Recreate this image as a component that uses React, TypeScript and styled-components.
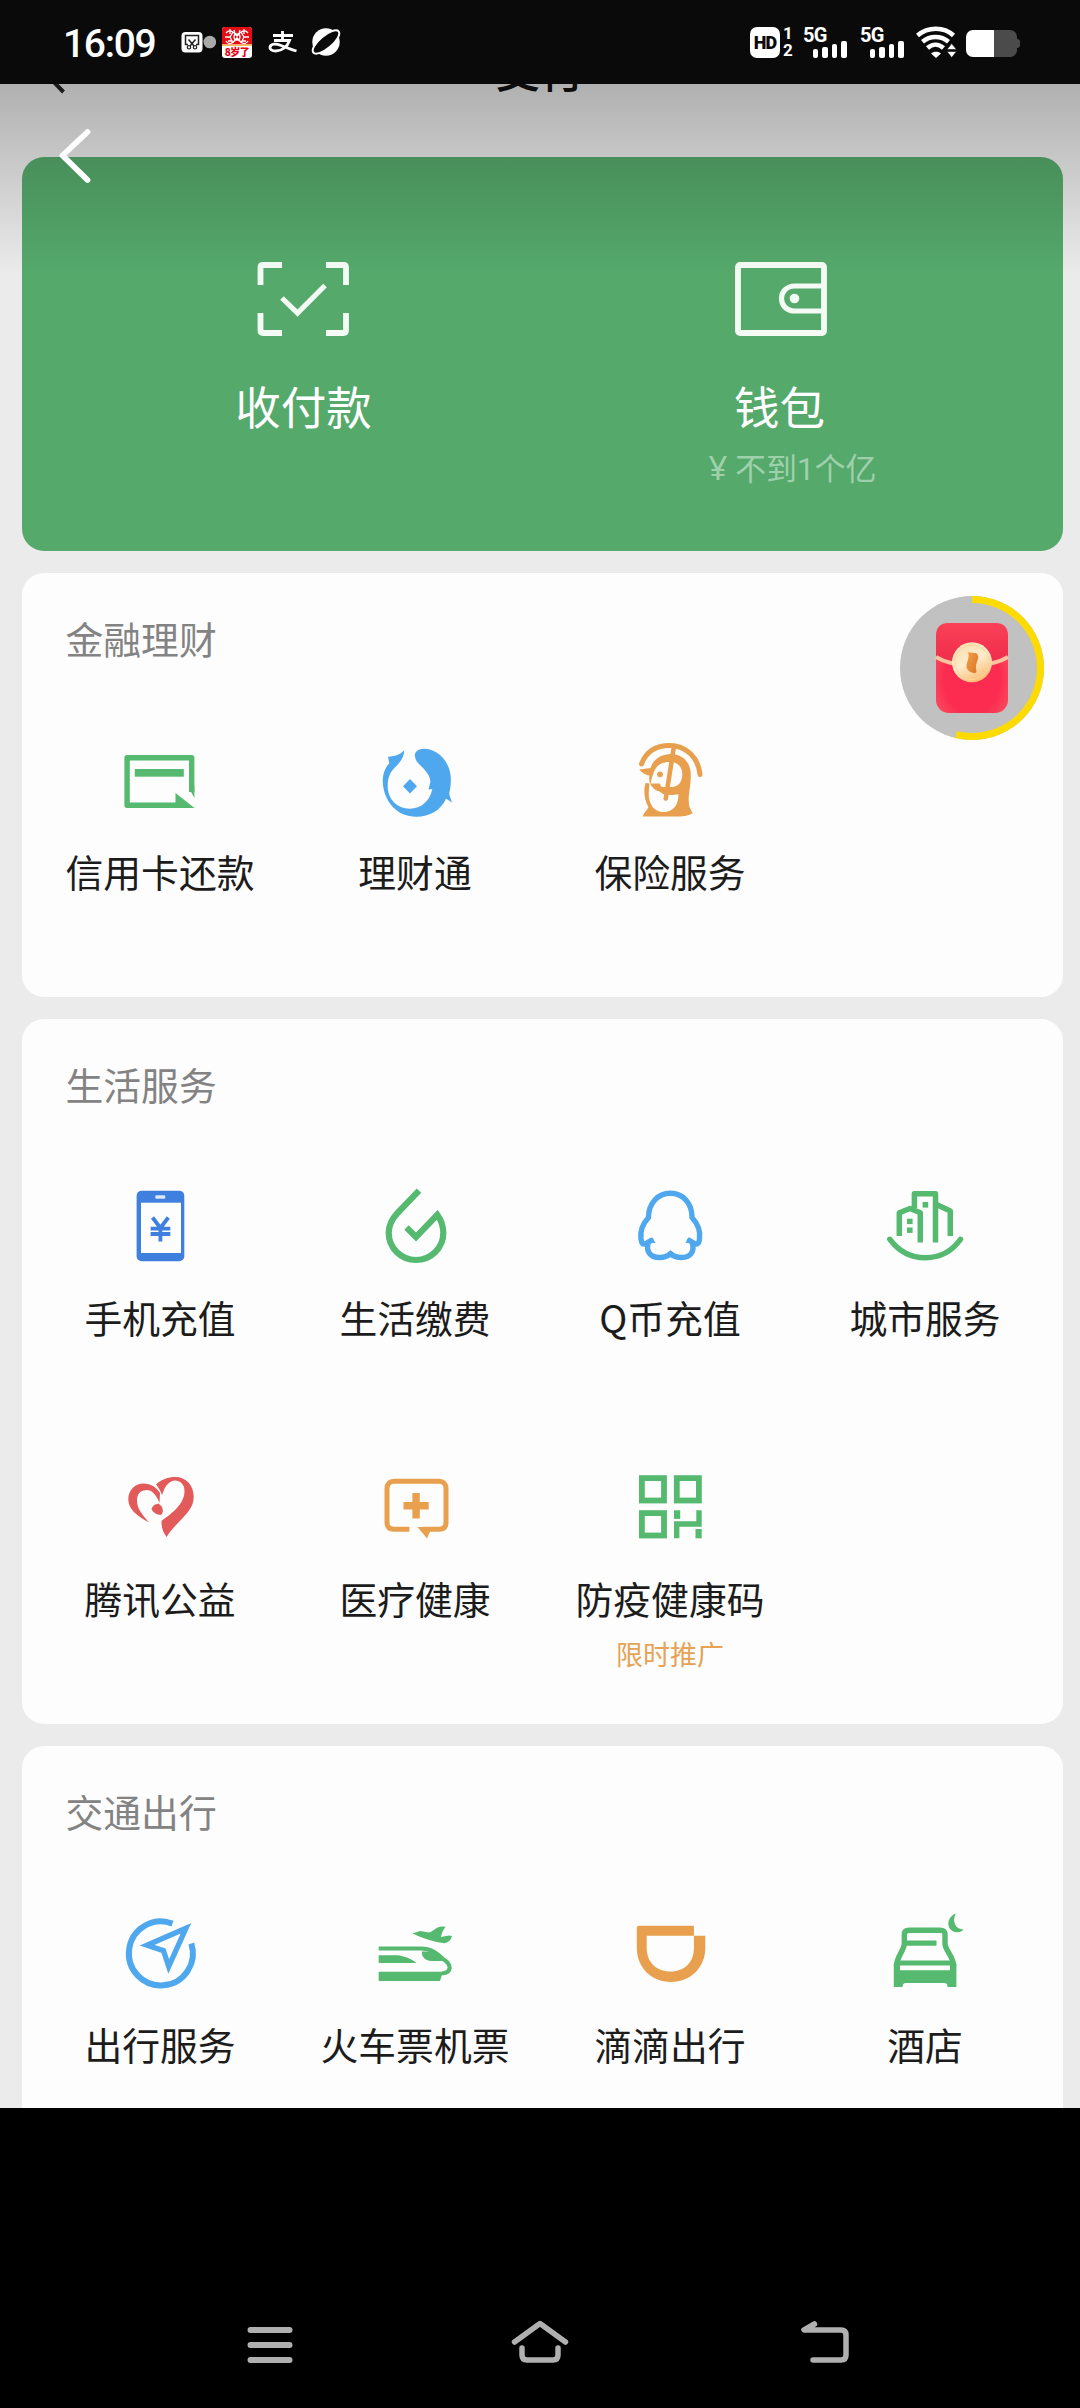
import React from "react";
import styled, { createGlobalStyle } from "styled-components";

const GREEN = "#55b96f";
const BLUE = "#4fa8ee";
const DEEP_BLUE = "#3f80de";
const ORANGE = "#e8a04e";
const RED = "#e25a5a";

const GlobalStyle = createGlobalStyle`
  html, body { margin: 0; padding: 0; background: #000; }
  * { box-sizing: border-box; }
`;

const Phone = styled.div`
  width: 1080px;
  height: 2408px;
  display: flex;
  flex-direction: column;
  background: #000;
  overflow: hidden;
  font-family: Roboto, "Noto Sans CJK SC", sans-serif;
`;

/* ---------- status bar ---------- */

const StatusBar = styled.div`
  height: 84px;
  flex: none;
  display: flex;
  justify-content: space-between;
  background: #0a0a0a;
  color: #fff;
  padding: 0 60px 0 63px;
`;

const StatusGroup = styled.div`
  display: flex;
  align-items: center;
  height: 84px;
`;

const Clock = styled.div`
  width: 118px;
  font: 500 39px/44px Roboto, sans-serif;
  letter-spacing: -1.3px;
  padding-top: 4px;
`;

const StatusIcon = styled.svg<{ $gap?: number }>`
  display: block;
  flex: none;
  margin-left: ${(p) => p.$gap ?? 0}px;
`;

const RedBadge = styled.div`
  width: 30px;
  height: 31px;
  margin-left: 6px;
  border-radius: 3px;
  overflow: hidden;
  background: #fff;
  display: flex;
  flex-direction: column;
`;

const BadgeText = styled.div`
  font: 900 10px/11px "Noto Sans CJK SC", sans-serif;
  letter-spacing: -0.6px;
  color: #e60012;
  text-align: center;
  margin-top: -1px;
`;

const HdBadge = styled.div`
  width: 30px;
  height: 31px;
  border-radius: 7px;
  background: #fff;
  color: #0a0a0a;
  font: 900 18px/31px Roboto, sans-serif;
  letter-spacing: -0.8px;
  text-align: center;
`;

const SimNumbers = styled.div`
  width: 12px;
  margin-left: 2px;
  display: flex;
  flex-direction: column;
  gap: 2px;
  font: 700 17px/15px Roboto, sans-serif;
  text-align: center;
`;

const Signal = styled.div<{ $gap: number }>`
  width: 43px;
  height: 31px;
  margin-left: ${(p) => p.$gap}px;
  display: flex;
  flex-direction: column;
  justify-content: space-between;
`;

const SignalLabel = styled.div`
  height: 14px;
  margin-left: -1px;
  font: 700 20px/16px Roboto, sans-serif;
  letter-spacing: -0.8px;
`;

const SignalBars = styled.div`
  display: flex;
  align-items: flex-end;
  gap: 3.6px;
  margin: -1px 0 0 8.5px;
`;

const SignalBar = styled.div<{ $height: number }>`
  width: 6px;
  height: ${(p) => p.$height}px;
  border-radius: 2px;
  background: #fff;
`;

const Battery = styled.div`
  width: 51px;
  height: 27px;
  margin-left: 9px;
  margin-top: 3px;
  border-radius: 7px;
  background: linear-gradient(90deg, #fff 28px, #4b4b4b 28px);
`;

const BatteryNub = styled.div`
  width: 3px;
  height: 9px;
  margin-top: 3px;
  border-radius: 0 3px 3px 0;
  background: #4b4b4b;
`;

/* ---------- page ---------- */

const Page = styled.main`
  position: relative;
  height: 2024px;
  flex: none;
  overflow: hidden;
  background: #ebebeb;
  padding: 0 17px 0 22px;
  display: flex;
  flex-direction: column;
  gap: 22.5px;
`;

const Header = styled.header`
  height: 50.5px;
  flex: none;
  display: flex;
  justify-content: center;
`;

const HeaderTitle = styled.div`
  margin: -45px 5px 0 0;
  height: 60px;
  font: 500 44px/60px "Noto Sans CJK SC", sans-serif;
  color: #111;
`;

const HeaderBack = styled.svg`
  position: absolute;
  left: 40px;
  top: 0;
`;

const TopShade = styled.div`
  position: absolute;
  inset: 0 0 auto 0;
  height: 190px;
  background: linear-gradient(rgba(0, 0, 0, 0.25), rgba(0, 0, 0, 0));
`;

const BackButton = styled.svg`
  position: absolute;
  left: 54px;
  top: 40px;
`;

const PayPanel = styled.section`
  height: 393.5px;
  flex: none;
  padding: 0 43.5px;
  border-radius: 22px;
  background: #55a96b;
  display: grid;
  grid-template-columns: 476px 476px;
`;

const PayEntry = styled.div`
  display: flex;
  flex-direction: column;
  align-items: center;
  padding-top: 102px;
`;

const PayLabel = styled.div`
  margin-top: 38px;
  font: 400 45.5px/56px "Noto Sans CJK SC", sans-serif;
  color: #fff;
`;

const Balance = styled.div`
  margin-top: 15px;
  padding-left: 26px;
  font: 400 31px/40px Roboto, "Noto Sans CJK SC", sans-serif;
  color: #9fd0ac;
  white-space: pre;
`;

const Yen = styled.span`
  font: 400 33px/40px "Noto Sans", sans-serif;
`;

const Card = styled.section`
  flex: none;
  padding: 39px 10.5px 40px;
  border-radius: 22px;
  background: #fdfdfd;
`;

const CardTitle = styled.h2`
  margin: 0 0 72px 33px;
  font: 400 37.8px/52px "Noto Sans CJK SC", sans-serif;
  color: #838383;
`;

const ServiceGrid = styled.div`
  display: grid;
  grid-template-columns: repeat(4, 1fr);
  grid-auto-rows: 220.5px;
  row-gap: 60.5px;
`;

const Service = styled.div`
  display: flex;
  flex-direction: column;
  align-items: center;
`;

const ServiceIcon = styled.svg`
  display: block;
  width: 90px;
  height: 90px;
  flex: none;
`;

const ServiceLabel = styled.div`
  margin-top: 20px;
  font: 400 37.8px/50px "Noto Sans CJK SC", sans-serif;
  color: #1c1c1c;
  white-space: nowrap;
`;

const ServiceNote = styled.div`
  margin-top: 11px;
  font: 400 27px/40px "Noto Sans CJK SC", sans-serif;
  color: #e6a255;
`;

const RedPacket = styled.svg`
  position: absolute;
  left: 900px;
  top: 512px;
`;

const Spacer = styled.div`
  flex: 1;
`;

const NavBar = styled.nav`
  height: 128px;
  display: flex;
  align-items: center;
  justify-content: space-between;
  padding: 0 220px;
`;

/* ---------- service icons, each on a 90×90 grid ---------- */

const icons: Record<string, React.ReactNode> = {
  card: (
    <g fill={GREEN}>
      <path
        d="M76.700 56V21.800H12.100V69.200H66"
        fill="none"
        stroke={GREEN}
        strokeWidth="5.400"
        strokeLinejoin="round"
      />
      <path d="M74 52L79.400 62V50Z" />
      <rect x="19.800" y="33" width="49" height="7.700" />
      <path d="M60.500 57L79.500 71.900H60.500Z" />
    </g>
  ),
  fish: (
    <g fill={BLUE}>
      <path d="M34.300 14.300C30 19 24 20.500 18 20.700L19.300 27.300C15 32 12.700 38 12.700 46C14 67 28 80.700 46 80.700C60 80.700 71 74 76 62.700C78 63.500 80 65 81.700 66.700C81.500 63 79 60 79.300 56.700C80.700 52 81 46 80.700 40C79 25 68 12.700 53.300 12.700C47 13 44 17 45 20.700C46 26 49 28 52 31C57 36 60.500 41 60.300 46L58.500 53.500L62.300 53C60 65 51 72.700 40 72.700C27 72.700 17.700 63 17.700 50C17.700 42 20 37 23.300 33.300C29 27 33.500 24 34.300 14.300Z" />
      <path d="M40 43L47 50.300L40 57.500L33 50.300Z" />
    </g>
  ),
  insurance: (
    <g>
      <path
        d="M16.500 28C21 16 31 9.500 44.500 9.500C61.500 9.500 73.500 22 75 38.500"
        fill="none"
        stroke={ORANGE}
        strokeWidth="5"
        strokeLinecap="round"
      />
      <path
        fill={ORANGE}
        d="M14.300 33.500L25.500 32C28 23 37 18 46 18C57 18 65.500 26 65.800 38C66 52 62 62 64.500 71L67.700 77.300C63 79.500 60 80.500 53 80.500H17.700C19 76 22 75 23.500 71C19 64 18.500 54 20.500 47L25 47.500C24 44 24 42 24.500 39.500C20 39 16 36 14.300 33.500Z"
      />
      <path
        fill="#fdfdfd"
        d="M28.500 37C31 29 37 26 45 26C53 26 57.300 31 57.300 38C57.300 46 53 51.500 46 51L36 51L35 47.500L25.500 47.500C26.500 44 27 41 28.500 37Z"
      />
      <path
        fill="#fdfdfd"
        d="M24.500 46.500C28 53 30 54 34.500 55.500L38 58L46 59C49 59 52 57.500 53.500 58.500C53.500 69 48 76 38.500 76C29 76 23.500 68 23.700 57Z"
      />
      <path
        d="M49 10L40.800 62.500M34 52.500L52 56"
        stroke={ORANGE}
        strokeWidth="4.600"
        strokeLinecap="round"
      />
      <circle cx="35" cy="38.300" r="2.900" fill={ORANGE} />
    </g>
  ),
  phone: (
    <g>
      <rect x="21.600" y="8.700" width="47.700" height="70.600" rx="5" fill={DEEP_BLUE} />
      <rect x="26" y="20.700" width="40" height="50.300" fill="#fdfdfd" />
      <rect x="40.300" y="13.300" width="10" height="3.400" rx="1.200" fill="#dce9fa" />
      <path
        d="M37.500 35.500L45.400 46L53.300 35.500M45.400 46V59.500M35.600 46.700H55.300M35.600 52H55.300"
        fill="none"
        stroke={DEEP_BLUE}
        strokeWidth="3.800"
      />
    </g>
  ),
  drop: (
    <path
      d="M49 8.700L27.500 31C21.500 37.500 18.700 43.500 18.700 50.700A27.300 27.300 0 0 0 73.300 50.700C73.300 44 71.500 38.500 67.300 32.800L46 55L36.500 45.500"
      fill="none"
      stroke={GREEN}
      strokeWidth="6.200"
    />
  ),
  penguin: (
    <g>
      <path
        d="M45.300 11.300C33 11.300 23.500 21 23.500 35.500C17.500 42 15 50 16 57C16.500 61.500 18 62.500 20 62L26 58.500M23.500 60C20.500 69 25 75.500 34.500 75.500C39 75.500 43 74 45.500 71.500C48 74 52 75.500 56.500 75.500C66 75.500 70 69 67 60M64.500 58.500L70.500 62C73 62.500 74 61 74.500 57C75.500 50 73 42 67 35.500C67 21 58 11.300 45.300 11.300"
        fill="none"
        stroke={BLUE}
        strokeWidth="5.400"
        strokeLinecap="round"
        strokeLinejoin="round"
      />
      <path d="M27 55L30.500 61H22ZM64 55L60.500 61H69ZM45.500 68L50 74H41Z" fill={BLUE} />
    </g>
  ),
  city: (
    <g>
      <g
        fill="none"
        stroke={GREEN}
        strokeWidth="5.500"
        strokeLinejoin="round"
      >
        <path d="M9.900 57.300C19 69.500 31 75.700 45.400 75.700C60 75.700 72 69.500 80.500 57.300" strokeLinecap="round" />
        <path d="M19.300 54V30.700L30 26.500L40.300 30.700V60.500" />
        <path d="M34.400 26V11.700H55.500V60.500" />
        <path d="M56 22.300L70.300 29V54" />
      </g>
      <g fill={GREEN}>
        <rect x="42.600" y="20" width="5.600" height="5.600" />
        <rect x="27" y="36.700" width="5.600" height="5.400" />
        <rect x="27" y="45.500" width="5.600" height="5.400" />
      </g>
    </g>
  ),
  heart: (
    <g fill={RED}>
      <path d="M34 59.500C22 53 13.300 46 13.300 36.500C13.300 27 20 20.500 28.500 20.500C36 20.500 41 24 45 30L44.500 40C41 31 36.500 27 32 27C25.500 27 22 31 22 37.500C22 46 27 51 34 59.500Z" />
      <path d="M41 21.500C46 16.500 53 14 60.300 14C71 14 78.700 22 78.700 34C78.700 50 62 57 51.600 74C47 68 46.500 63 46.500 58C54 52 69 43 69.500 28.500C69.500 21 65 17.500 60 17.500C52 18.500 49.500 25 47 32C45.500 27.500 43.500 24.500 41 21.500Z" />
      <path d="M39 42L43.500 40.500C48.500 44 49 49 46 52C41.500 52 37 49 36.500 45.500Z" />
    </g>
  ),
  medical: (
    <g>
      <path
        d="M39.400 66.300H24C19.500 66.300 17 64 17 59.500V25.500C17 21 19.500 18.300 24 18.300H69C73.500 18.300 76 21 76 25.500V59.500C76 64 73.500 66.300 69 66.300H53"
        fill="none"
        stroke={ORANGE}
        strokeWidth="5"
      />
      <path d="M47.500 64H62L57 75.500Z" fill={ORANGE} />
      <path d="M46.100 30V55.400M33.500 42.700H58.700" stroke={ORANGE} strokeWidth="7.400" />
    </g>
  ),
  qr: (
    <g>
      <g fill="none" stroke={GREEN} strokeWidth="5.800">
        <rect x="16.900" y="15.100" width="22.100" height="22.400" />
        <rect x="51.800" y="15.100" width="22.100" height="22.400" />
        <rect x="16.900" y="50.100" width="22.100" height="22.400" />
        <path d="M74 47.300V61H51.700V75.300" strokeWidth="5.400" />
      </g>
      <rect x="49" y="47.300" width="6.200" height="8.600" fill={GREEN} />
      <rect x="70.500" y="66" width="6.200" height="9.300" fill={GREEN} />
    </g>
  ),
  compass: (
    <g fill="none" stroke={BLUE} strokeWidth="6">
      <path d="M57.500 14.600A32 32 0 1 0 76.300 34.500" />
      <path d="M71 19.200L32 36.200L48.500 41.700L53.700 57.500Z" strokeWidth="5.300" />
    </g>
  ),
  train: (
    <g fill={GREEN}>
      <path
        d="M8.700 39.500H51C61 39.500 67 44 73 50C82 55.500 82 63.500 72 64.500"
        fill="none"
        stroke={GREEN}
        strokeWidth="4.200"
      />
      <path d="M8.700 62.700H73L70 71.900H8.700Z" />
      <path d="M8.700 46.300H27C35 47 41 50 46.500 53.900H8.700Z" />
      <path d="M52 42.500H64L74 52H62C55 52 51 47 52 42.500Z" />
      <path d="M42.500 24.500L50 22L59 23.500C62 23 64 20.500 67 18.800C70 17.500 73 17.200 75.500 18C73 21 71.500 24.500 71 28L76 27C78.500 26 80.500 26.500 82 27C81 30.500 79 33.500 74.500 34.200C64 33 53 29.500 42.500 24.500Z" />
    </g>
  ),
  ride: (
    <path
      fill={ORANGE}
      fillRule="evenodd"
      d="M14 16.700H68.900V26.700H80.300V39C80.300 58 66 73 46 73C26 73 11.800 58 11.800 39V19C11.800 17.400 12.600 16.700 14 16.700ZM21.700 26.700V39C21.700 53 31 62.500 45.500 62.500C60 62.500 68.900 53 68.900 39V26.700Z"
    />
  ),
  hotel: (
    <g>
      <path
        d="M16.500 57C16.500 48 24.300 41 24.300 34.700V26C24.300 22.500 26 21.300 29 21.300H60C63.500 21.300 65 22.500 65 26V34.700C65 41 73.700 48 73.700 57"
        fill="none"
        stroke={GREEN}
        strokeWidth="5.400"
      />
      <path d="M24 34.200H56.500M17 54H73" stroke={GREEN} strokeWidth="5.200" />
      <path
        fill={GREEN}
        d="M13.800 55L20 54.500V61.300H70V54.500L76.400 55V78H67.500C67.500 75 66.500 74 64.500 74H26C23.500 74 22.700 75 22.500 78H13.800Z"
      />
      <path
        fill={GREEN}
        d="M75.700 4.500C65.500 8.500 66 22.500 77 23.300C80 23.300 82.500 22 83.500 20.500C75 20.500 72 12 75.700 4.500Z"
      />
    </g>
  ),
};

type Item = { icon: string; label: string; note?: string };

const sections: { title: string; items: Item[] }[] = [
  {
    title: "金融理财",
    items: [
      { icon: "card", label: "信用卡还款" },
      { icon: "fish", label: "理财通" },
      { icon: "insurance", label: "保险服务" },
    ],
  },
  {
    title: "生活服务",
    items: [
      { icon: "phone", label: "手机充值" },
      { icon: "drop", label: "生活缴费" },
      { icon: "penguin", label: "Q币充值" },
      { icon: "city", label: "城市服务" },
      { icon: "heart", label: "腾讯公益" },
      { icon: "medical", label: "医疗健康" },
      { icon: "qr", label: "防疫健康码", note: "限时推广" },
    ],
  },
  {
    title: "交通出行",
    items: [
      { icon: "compass", label: "出行服务" },
      { icon: "train", label: "火车票机票" },
      { icon: "ride", label: "滴滴出行" },
      { icon: "hotel", label: "酒店" },
    ],
  },
];

function Signal5G({ gap }: { gap: number }) {
  return (
    <Signal $gap={gap}>
      <SignalLabel>5G</SignalLabel>
      <SignalBars>
        {[9, 11, 14, 17].map((h) => (
          <SignalBar key={h} $height={h} />
        ))}
      </SignalBars>
    </Signal>
  );
}

function Status() {
  return (
    <StatusBar>
      <StatusGroup>
        <Clock>16:09</Clock>
        <StatusIcon width="35" height="22" viewBox="0 0 35 22">
          <rect x="0.500" y="1" width="21" height="20.500" rx="4" fill="#fff" />
          <path
            d="M7 13.500H4.500V4.500H17.500V13.500H15M7.500 8.500L13 15M14.500 8.500L9 15"
            fill="none"
            stroke="#222"
            strokeWidth="1.500"
          />
          <circle cx="8" cy="16.300" r="1.700" fill="none" stroke="#222" strokeWidth="1.200" />
          <circle cx="14" cy="16.300" r="1.700" fill="none" stroke="#222" strokeWidth="1.200" />
          <circle cx="28.800" cy="11" r="6.300" fill="#a9a9a9" />
        </StatusIcon>
        <RedBadge>
          <svg width="30" height="20" viewBox="0 0 30 20">
            <rect width="30" height="17.500" fill="#e60c14" />
            <rect y="17.500" width="30" height="1.500" fill="#f6c05a" />
            <g fill="none" stroke="#fff" strokeWidth="1.300">
              <path d="M4 6C7 2 11 4 15 9C19 4 23 2 26 6M4 14C7 19 11 16 15 11C19 16 23 19 26 14" />
              <path d="M3 10H8L11 5M27 10H22L19 5M8 10L11 16M22 10L19 16M8 2V7M22 2V7M6 14H10M20 14H24M12 3L13 7M18 3L17 7" />
              <circle cx="15" cy="10" r="3" />
            </g>
          </svg>
          <BadgeText>8岁了</BadgeText>
        </RedBadge>
        <StatusIcon $gap={16} width="30" height="24" viewBox="0 0 30 24">
          <path
            d="M5 5.500H25M14.500 1V10M6 10.500H21.500C19.500 16.500 14 21 8 21C3.500 21 1.500 19 2 17C3 13.500 8 13.500 13 15.500C18 17.500 23 19.500 28.500 21"
            fill="none"
            stroke="#fff"
            strokeWidth="2.800"
          />
        </StatusIcon>
        <StatusIcon $gap={12} width="32" height="30" viewBox="0 0 32 30">
          <circle cx="16" cy="15" r="13.700" fill="#fff" />
          <ellipse cx="16" cy="15" rx="16.500" ry="6.300" transform="rotate(-40 16 15)" fill="#0a0a0a" stroke="#fff" strokeWidth="2" />
        </StatusIcon>
      </StatusGroup>
      <StatusGroup>
        <HdBadge>HD</HdBadge>
        <SimNumbers>
          <span>1</span>
          <span>2</span>
        </SimNumbers>
        <Signal5G gap={10} />
        <Signal5G gap={14} />
        <StatusIcon $gap={12} width="41" height="32" viewBox="0 0 41 32">
          <g fill="none" stroke="#fff" strokeWidth="4.500">
            <path d="M1.500 9.500C12 0.500 28 0.500 37.500 9.500" />
            <path d="M6.500 15.800C14 9.300 25 9.300 32.500 15.800" />
            <path d="M11.500 22C16.500 17.500 22.500 17.500 27.500 22" />
          </g>
          <path d="M15 27.500C17.500 25 22.500 25 25 27.500L20 32Z" fill="#fff" />
          <path d="M31 23.500L35.700 17.500L40.500 23.500ZM31 25.500H40.500L35.700 31.500Z" fill="#fff" stroke="#0a0a0a" strokeWidth="0.600" />
        </StatusIcon>
        <Battery />
        <BatteryNub />
      </StatusGroup>
    </StatusBar>
  );
}

function FloatingPacket() {
  return (
    <RedPacket width="144" height="144" viewBox="0 0 144 144">
      <defs>
        <radialGradient id="packet" cx="50%" cy="62%" r="70%">
          <stop offset="0.550" stopColor="#fb2c50" />
          <stop offset="1" stopColor="#fb5b66" />
        </radialGradient>
        <linearGradient id="flap" x1="0" y1="0" x2="0" y2="1">
          <stop offset="0" stopColor="#fb4156" />
          <stop offset="1" stopColor="#ee2b4c" />
        </linearGradient>
        <linearGradient id="coin" x1="0.200" y1="0" x2="0.700" y2="1">
          <stop offset="0" stopColor="#f7e0ae" />
          <stop offset="0.500" stopColor="#fdebcb" />
          <stop offset="1" stopColor="#fbb86d" />
        </linearGradient>
        <linearGradient id="flame" x1="0" y1="0" x2="1" y2="1">
          <stop offset="0" stopColor="#f3a04a" />
          <stop offset="1" stopColor="#d97526" />
        </linearGradient>
      </defs>
      <circle cx="72" cy="72" r="72" fill="#c1c1c1" />
      <path d="M72 3.500A68.500 68.500 0 1 1 56 138.600" fill="none" stroke="#fedb00" strokeWidth="7" />
      <rect x="36" y="27" width="72" height="90" rx="13" fill="url(#packet)" />
      <path d="M36 60V40Q36 27 49 27H95Q108 27 108 40V60C96 72 48 72 36 60Z" fill="url(#flap)" />
      <path d="M36 61C45 66.500 53 68.500 72 68.500C91 68.500 99 66.500 108 61" fill="none" stroke="#fdc3a0" strokeWidth="4" />
      <circle cx="72" cy="66.300" r="20" fill="url(#coin)" />
      <circle cx="72" cy="66.300" r="17.300" fill="none" stroke="#fbd596" strokeWidth="1" />
      <path d="M67.500 55.500C70 58 76.500 55.500 77.500 58.500C80.500 63 74 67 76.500 75C76.500 76.500 75 77.500 73.500 77C67.500 75.500 65.500 72 67 67C68.500 62 69.500 59 67.500 55.500Z" fill="url(#flame)" />
    </RedPacket>
  );
}

export default function App() {
  return (
    <>
      <GlobalStyle />
      <Phone>
        <Status />
        <Page>
          <Header>
            <HeaderBack width="30" height="12" viewBox="0 0 30 12">
              <path d="M8 -8L23.500 8" stroke="#222" strokeWidth="4" />
            </HeaderBack>
            <HeaderTitle>支付</HeaderTitle>
          </Header>

          <PayPanel>
            <PayEntry>
              <svg width="100" height="80" viewBox="0 0 100 80" fill="none" stroke="#f4fbf5">
                <path
                  d="M28 6H9Q6.500 6 6.500 8.500V26M72 6H89.500Q92 6 92 8.500V26M28 74H9Q6.500 74 6.500 71.500V54M72 74H89.500Q92 74 92 71.500V54"
                  strokeWidth="5.800"
                />
                <path d="M28 39L43.500 54L71 26.500" strokeWidth="5.200" />
              </svg>
              <PayLabel>收付款</PayLabel>
            </PayEntry>
            <PayEntry>
              <svg width="100" height="80" viewBox="0 0 100 80" fill="none" stroke="#f4fbf5">
                <rect x="8" y="6" width="86" height="68" rx="2" strokeWidth="5.800" />
                <path d="M94 27H65C47 27 47 52 65 52H94" strokeWidth="5.200" />
                <circle cx="64.500" cy="39.500" r="4.800" fill="#f4fbf5" stroke="none" />
              </svg>
              <PayLabel>钱包</PayLabel>
              <Balance>
                <Yen>¥</Yen> 不到1个亿
              </Balance>
            </PayEntry>
          </PayPanel>

          {sections.map((section) => (
            <Card key={section.title}>
              <CardTitle>{section.title}</CardTitle>
              <ServiceGrid>
                {section.items.map((item) => (
                  <Service key={item.label}>
                    <ServiceIcon viewBox="0 0 90 90">{icons[item.icon]}</ServiceIcon>
                    <ServiceLabel>{item.label}</ServiceLabel>
                    {item.note && <ServiceNote>{item.note}</ServiceNote>}
                  </Service>
                ))}
              </ServiceGrid>
            </Card>
          ))}

          <TopShade />
          <BackButton width="44" height="64" viewBox="0 0 44 64">
            <path d="M33.500 8L8.500 31.500L33.500 56" fill="none" stroke="#fff" strokeWidth="5.800" strokeLinecap="round" strokeLinejoin="round" />
          </BackButton>
          <FloatingPacket />
        </Page>
        <Spacer />
        <NavBar>
          <svg width="100" height="60" viewBox="0 0 100 60" stroke="#b0b0b0" strokeWidth="6" strokeLinecap="round">
            <path d="M30.500 16H69.500M30.500 31H69.500M30.500 46H69.500" />
          </svg>
          <svg width="100" height="60" viewBox="0 0 100 60" fill="none" stroke="#b0b0b0" strokeWidth="5.500" strokeLinecap="round" strokeLinejoin="round">
            <path d="M24.500 28L50 9.500L75.500 28" />
            <path d="M32 34V41Q32 46 37 46H63Q68 46 68 41V34" />
          </svg>
          <svg width="100" height="60" viewBox="0 0 100 60" fill="none" stroke="#b0b0b0" strokeWidth="5.500" strokeLinecap="round" strokeLinejoin="round">
            <path d="M54.500 10L44 16H81Q86 16 86 21V41Q86 46 81 46H53" />
          </svg>
        </NavBar>
      </Phone>
    </>
  );
}
